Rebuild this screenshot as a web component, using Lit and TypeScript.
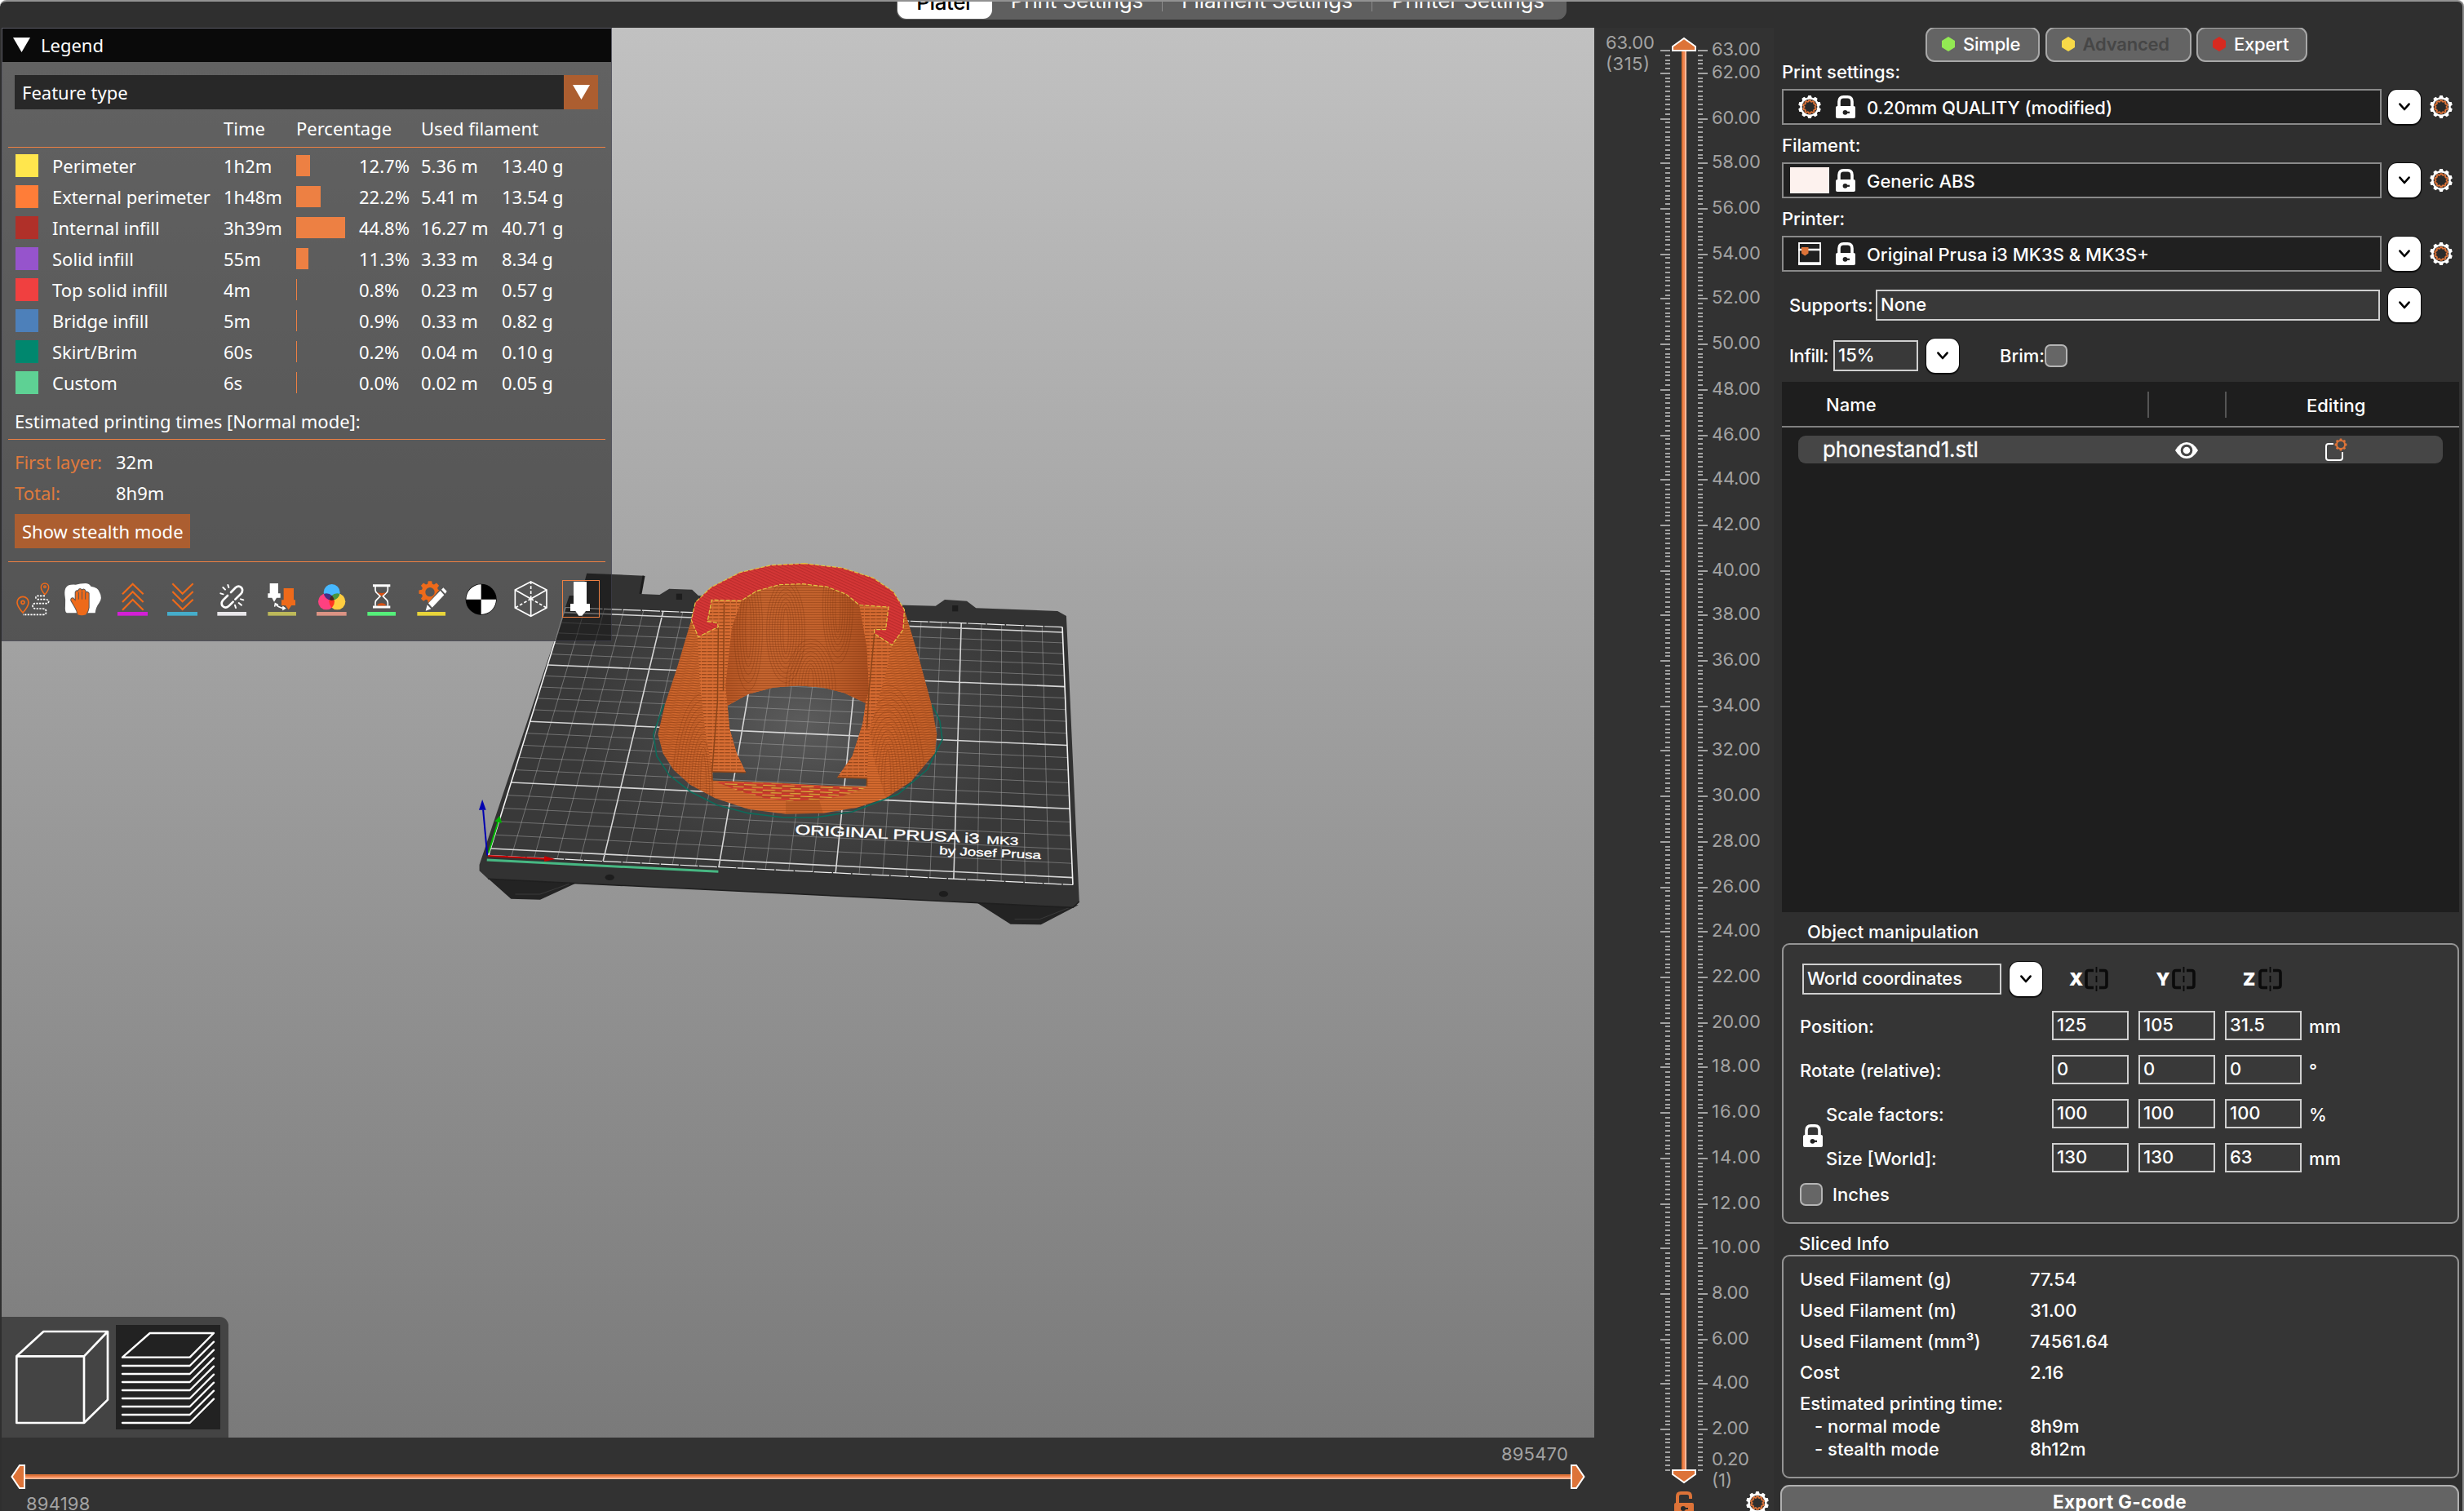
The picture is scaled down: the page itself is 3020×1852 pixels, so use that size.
import { LitElement, html, css, svg } from "lit";
import { customElement, property } from "lit/decorators.js";

type Pt = [number, number];

/* ---------- geometry helpers ---------- */

function cogPath(cx: number, cy: number, outer: number, inner: number, teeth: number): string {
  const step = (Math.PI * 2) / teeth;
  const pts: string[] = [];
  for (let i = 0; i < teeth; i++) {
    const a = i * step - Math.PI / 2;
    const ring: [number, number][] = [
      [-0.36, inner],
      [-0.2, outer],
      [0.2, outer],
      [0.36, inner],
    ];
    for (const [k, r] of ring) {
      pts.push(`${(cx + Math.cos(a + k * step) * r).toFixed(2)} ${(cy + Math.sin(a + k * step) * r).toFixed(2)}`);
    }
  }
  return `M${pts.join("L")}Z`;
}

/* Maps the unit square to a quad: (0,0) (1,0) (1,1) (0,1). */
function quadMap(a: Pt, b: Pt, c: Pt, d: Pt) {
  const dx1 = b[0] - c[0], dx2 = d[0] - c[0], sx = a[0] - b[0] + c[0] - d[0];
  const dy1 = b[1] - c[1], dy2 = d[1] - c[1], sy = a[1] - b[1] + c[1] - d[1];
  const den = dx1 * dy2 - dx2 * dy1;
  const g = (sx * dy2 - dx2 * sy) / den;
  const h = (dx1 * sy - sx * dy1) / den;
  const m = [b[0] - a[0] + g * b[0], d[0] - a[0] + h * d[0], a[0], b[1] - a[1] + g * b[1], d[1] - a[1] + h * d[1], a[1]];
  return (u: number, v: number): Pt => {
    const w = g * u + h * v + 1;
    return [(m[0] * u + m[1] * v + m[2]) / w, (m[3] * u + m[4] * v + m[5]) / w];
  };
}

const bedUnit = quadMap([81, 1140], [1479, 1247], [1455, 345], [257, 272]);
const bed = (x: number, y: number): Pt => bedUnit(x / 250, (y - 5) / 200);
const seg = (a: Pt, b: Pt) => `M${a[0].toFixed(1)} ${a[1].toFixed(1)}L${b[0].toFixed(1)} ${b[1].toFixed(1)}`;

function gridPaths() {
  let minor = "";
  let major = "";
  for (let x = 10; x < 250; x += 10) {
    const line = seg(bed(x, 0), bed(x, 210));
    if (x % 50 === 0) major += line;
    else minor += line;
  }
  for (let y = 5; y <= 205; y += 10) {
    const line = seg(bed(0, y), bed(250, y));
    if ((y - 5) % 50 === 0) major += line;
    else minor += line;
  }
  const edge = seg(bed(0, 0), bed(0, 210)) + seg(bed(250, 0), bed(250, 210));
  const dashed = seg(bed(0, 0), bed(250, 0)) + seg(bed(0, 210), bed(250, 210));
  const surface = "M" + [bed(0, 0), bed(250, 0), bed(250, 210), bed(0, 210)].map((p) => p.join(" ")).join("L") + "Z";
  return { minor, major, edge, dashed, surface };
}

/* Nested contour rings that give the printed walls their layered grain. */
function grain(cx: number, cy: number, rx: number, ry: number, count: number) {
  return Array.from({ length: count }, (_, i) => {
    const k = (i + 1) / count;
    return svg`<ellipse cx=${cx} cy=${cy} rx=${rx * k} ry=${ry * (0.35 + 0.65 * k)} />`;
  });
}

/* ---------- shared icons ---------- */

const cogIcon = (size = 28) => html`<svg width=${size} height=${size} viewBox="0 0 28 28">
  <path d=${cogPath(14, 14, 14, 11.8, 10)} fill="#fff" />
  <circle cx="14" cy="14" r="9.4" fill="#2b2b2b" />
  <path d=${cogPath(14, 14, 8, 6.6, 10)} fill="none" stroke="#dd7338" stroke-width="1.7" />
</svg>`;

const lockIcon = html`<svg width="24" height="28" viewBox="0 0 24 28">
  <path d="M4 14V7.5Q4 1.8 9.5 1.8H14.5Q20 1.8 20 7.5V14" fill="none" stroke="#fff" stroke-width="3.6" />
  <rect x="0" y="13" width="24" height="15" rx="2" fill="#fff" />
  <circle cx="11.5" cy="20.8" r="2.9" fill="#222" />
  <rect x="12" y="19.7" width="5" height="2.2" fill="#222" />
</svg>`;

const printerIcon = html`<svg width="28" height="28" viewBox="0 0 28 28">
  <path d="M1 1H27V27H1Z" fill="none" stroke="#fff" stroke-width="1.8" />
  <path d="M0 25.5H28M0 9H28" stroke="#fff" stroke-width="2.4" />
  <path d="M4 6H12.5V13.5L8.2 16.5L4 13.5Z" fill="#dd7338" />
</svg>`;

const chevron = html`<svg width="16" height="12" viewBox="0 0 16 12">
  <path d="M2.4 2.6L8 9L13.6 2.6" fill="none" stroke="#000" stroke-width="2.6" stroke-linecap="round" stroke-linejoin="round" />
</svg>`;

const mirrorIcon = html`<svg width="29" height="30" viewBox="0 0 29 30">
  <path d="M11 4.5H5Q2 4.5 2 7.5V22.5Q2 25.5 5 25.5H11M18 4.5H24Q27 4.5 27 7.5V22.5Q27 25.5 24 25.5H18" fill="none" stroke="#0b0b0b" stroke-width="3.6" />
  <path d="M14.5 0V7M14.5 11V19M14.5 23V30" stroke="#0b0b0b" stroke-width="1.8" />
</svg>`;

const downTriangle = html`<svg width="21" height="18" viewBox="0 0 21 18"><path d="M0 0H21L10.5 18Z" fill="#fff" /></svg>`;

/* ---------- legend ---------- */

interface Feature {
  name: string;
  color: string;
  time: string;
  bar: number;
  pct: string;
  length: string;
  weight: string;
}

const FEATURES: Feature[] = [
  { name: "Perimeter", color: "#ffe64d", time: "1h2m", bar: 17, pct: "12.7%", length: "5.36 m", weight: "13.40 g" },
  { name: "External perimeter", color: "#ff7d38", time: "1h48m", bar: 30, pct: "22.2%", length: "5.41 m", weight: "13.54 g" },
  { name: "Internal infill", color: "#b03029", time: "3h39m", bar: 60, pct: "44.8%", length: "16.27 m", weight: "40.71 g" },
  { name: "Solid infill", color: "#9654cc", time: "55m", bar: 15, pct: "11.3%", length: "3.33 m", weight: "8.34 g" },
  { name: "Top solid infill", color: "#f04040", time: "4m", bar: 1, pct: "0.8%", length: "0.23 m", weight: "0.57 g" },
  { name: "Bridge infill", color: "#4d80ba", time: "5m", bar: 1, pct: "0.9%", length: "0.33 m", weight: "0.82 g" },
  { name: "Skirt/Brim", color: "#00876e", time: "60s", bar: 1, pct: "0.2%", length: "0.04 m", weight: "0.10 g" },
  { name: "Custom", color: "#5ed194", time: "6s", bar: 1, pct: "0.0%", length: "0.02 m", weight: "0.05 g" },
];

const OR = "#ee6a1a";
const underline = (x: number, w: number, color: string) => svg`<rect x=${x} y="114" width=${w} height="14" fill=${color} />`;

const LEGEND_ICONS = [
  svg`<path d="M27 117Q6 94 6 79A21 21 0 0 1 48 79Q48 94 27 117Z" fill="none" stroke=${OR} stroke-width="5" />
      <circle cx="27" cy="79" r="6" fill="none" stroke=${OR} stroke-width="5" />
      <path d="M108 50Q94 34 94 23A14 14 0 0 1 122 23Q122 34 108 50Z" fill="none" stroke=${OR} stroke-width="4.5" />
      <circle cx="108" cy="22" r="4" fill="none" stroke=${OR} stroke-width="4" />
      <path d="M108 55H82Q74 56 75 62Q77 68 84 68H112Q122 69 122 76Q121 83 112 83H72Q63 84 63 92Q64 101 74 102H100Q113 103 113 113Q113 124 102 124H27" fill="none" stroke="#fff" stroke-width="5" stroke-dasharray="7 4" />`,
  svg`<path d="M3 24Q10 12 38 14Q54 9 74 9Q88 9 94 20Q122 24 126 42Q138 62 124 82Q112 98 110 118H6Q-2 116 0 90Q2 70 -2 50Q-3 32 3 24Z" fill="#fff" />
      <path d="M46 124Q44 108 36 96L22 72Q20 64 28 64L38 74V42Q43 32 48 42V36Q55 24 61 36V37Q68 26 74 38V46Q80 36 86 46V98Q84 112 76 124Q60 130 46 124Z" fill=${OR} stroke="#565656" stroke-width="6" paint-order="stroke" />
      <path d="M49 42V68M61.500 38V68M74 44V68" stroke="#565656" stroke-width="3" />`,
  svg`<path d="M27 49L65 11L104 49M27 78L65 40L104 78M27 107L65 69L104 107" fill="none" stroke=${OR} stroke-width="6.500" />${underline(9, 111, "#d31fd6")}`,
  svg`<path d="M28 10L65 47L104 10M28 39L65 76L104 39M28 68L65 105L104 68" fill="none" stroke=${OR} stroke-width="6.500" />${underline(9, 111, "#45adcb")}`,
  svg`<g fill="none" stroke="#fff" stroke-width="8" stroke-linecap="round"><path d="M60 42L77 25Q88 15 98 24Q107 34 98 46L76 68" /><path d="M48 54L31 71Q21 83 30 93Q42 103 53 92L68 77" /><path stroke-width="6" d="M49 15L52 24M31 24L39 32M22 46L32 49M96 67L106 70M89 81L99 89M75 89L78 99" /></g>${underline(10, 107, "#e8e6ea")}`,
  svg`<path d="M20 9H51V46H59V62H45L36 77L28 62H13V46H20Z" fill="#fff" />
      <path d="M71 27H108V70H114V90H100L89 106L78 90H63V70H71Z" fill=${OR} />
      <path d="M40 84Q50 98 74 101M38 95L40 83L51 88M67 94L76 101L66 107" fill="none" stroke="#fff" stroke-width="4.500" />${underline(13, 104, "#bdb95a")}`,
  svg`<g style="isolation:isolate"><circle cx="65" cy="42" r="30" fill="#47b8ff" /><circle cx="45" cy="76" r="30" fill="#ff4080" style="mix-blend-mode:multiply" /><circle cx="85" cy="76" r="30" fill="#ffcd40" style="mix-blend-mode:multiply" /></g>${underline(9, 110, "#db9384")}`,
  svg`<path d="M33 17H97M33 96H97" stroke="#fff" stroke-width="9" />
      <path d="M42 20V34Q42 42 50 47L60 56L50 66Q42 72 42 80V92M88 20V34Q88 42 80 47L70 56L80 66Q88 72 88 80V92" fill="none" stroke="#fff" stroke-width="5" />
      <path d="M48 41Q65 49 82 41L65 56Z" fill="#dd5010" /><path d="M48 91Q52 82 65 82Q78 82 82 91Z" fill="#dd5010" />${underline(13, 104, "#55ef7a")}`,
  svg`<path d=${cogPath(60, 41, 41, 31, 8)} fill=${OR} /><circle cx="60" cy="41" r="17" fill="#565656" />
      <path d="M44 113L54 80L104 22L128 44L80 104Z" fill="#565656" />
      <path d="M44 110L50 88L64 103ZM54 82L98 36L112 52L68 98ZM102 32L109 25L122 38L116 47Z" fill="#fff" />${underline(13, 104, "#e8d43a")}`,
  svg`<circle cx="65" cy="68" r="57" fill="#000" /><path d="M65 68V13A55 55 0 0 0 10 68ZM65 68V123A55 55 0 0 0 120 68Z" fill="#fff" />`,
  svg`<path d="M65 3L123 33V99L65 130L7 99V33ZM7 33L65 66L123 33M65 66V130" fill="none" stroke="#fff" stroke-width="5" /><path d="M65 66V3M65 66L7 99M65 66L123 99" fill="none" stroke="#fff" stroke-width="5" stroke-dasharray="11 7" />`,
  svg`<path d="M39 3H87V84H99V111H84L70 128H58L46 111H27V84H39Z" fill="#fff" />`,
];

@customElement("gcode-legend")
class GcodeLegend extends LitElement {
  static styles = css`
    :host { display: block; box-sizing: border-box; width: 748px; height: 752px; font: 22px/30px "Noto Sans", "Open Sans", sans-serif; color: #fff; background: rgba(18, 18, 18, 0.54); border: 1px solid rgba(80, 80, 100, 0.5); }
    .title { display: flex; align-items: center; height: 41px; background: #0a0a0a; padding: 0 0 1px 13px; box-sizing: border-box; gap: 13px; }
    .combo { display: flex; margin: 16px 16px 0 15px; height: 42px; background: #282828; justify-content: space-between; align-items: center; padding-left: 9px; }
    .combo-btn { width: 42px; height: 42px; background: #ac5e30; display: flex; align-items: center; justify-content: center; }
    .cols { display: grid; grid-template-columns: 45px 210px 89px 77px 76px 99px 1fr; align-items: center; padding-left: 16px; height: 38px; }
    .head { height: 46px; }
    .span2 { grid-column: span 2; white-space: nowrap; }
    .rule { height: 1px; background: #ed8043; margin: 0 7px; }
    .rows { padding-top: 3px; }
    .swatch { width: 28px; height: 28px; }
    .bar { height: 26px; background: #ed8043; }
    .times { padding: 13px 0 0 15px; height: 50px; box-sizing: border-box; }
    .pair { display: grid; grid-template-columns: 124px 1fr; height: 38px; align-items: center; padding-left: 15px; }
    .first { margin-top: 8px; }
    .key { color: #e07a3c; }
    .stealth { margin: 7px 0 0 15px; width: 215px; height: 42px; background: #ac5e30; display: flex; align-items: center; padding-left: 9px; box-sizing: border-box; white-space: nowrap; }
    .rule.last { margin-top: 16px; }
    .icons { display: flex; gap: 17px; padding: 23px 0 0 16px; }
    .icon { display: block; width: 44px; height: 44px; overflow: visible; }
    .icon.on { outline: 1px solid #ed8043; }
  `;
  render() {
    return html`
      <div class="title">${downTriangle}<span>Legend</span></div>
      <div class="combo"><span>Feature type</span><div class="combo-btn">${downTriangle}</div></div>
      <div class="cols head"><span></span><span></span><span>Time</span><span class="span2">Percentage</span><span class="span2">Used filament</span></div>
      <div class="rule"></div>
      <div class="rows">
        ${FEATURES.map((f) => html`<div class="cols">
          <div class="swatch" style="background:${f.color}"></div><span>${f.name}</span><span>${f.time}</span>
          <div class="bar" style="width:${f.bar}px"></div><span>${f.pct}</span><span>${f.length}</span><span>${f.weight}</span>
        </div>`)}
      </div>
      <div class="times">Estimated printing times [Normal mode]:</div>
      <div class="rule"></div>
      <div class="pair first"><span class="key">First layer:</span><span>32m</span></div>
      <div class="pair"><span class="key">Total:</span><span>8h9m</span></div>
      <div class="stealth">Show stealth mode</div>
      <div class="rule last"></div>
      <div class="icons">
        ${LEGEND_ICONS.map((g, i) => html`<svg class="icon ${i === 11 ? "on" : ""}" viewBox="0 0 132 132">${g}</svg>`)}
      </div>
    `;
  }
}

/* ---------- 3D scene ---------- */

const OUTER = "M835 92L755 98L680 125L610 180L573 235L563 300L530 470L500 610L483 720L495 790L520 850L560 905L620 955L700 995L790 1013L880 1010L960 990L1030 955L1090 895L1148 790L1153 720L1140 610L1110 440L1075 262L1048 195L1000 145L925 108Z";
const HOLE = "M650 615L700 572L760 548L820 541L880 548L930 568L982 605L975 680L950 800L914 878L985 882L983 912L905 910L760 898L615 890L613 857L694 860L672 790L655 700Z";
const INNER = "M683 229L720 193L775 170L830 167L890 178L935 205L967 245L985 400L990 560L982 605L930 568L880 548L820 541L760 548L700 572L648 615L645 540L660 330Z";
const TOP = "M835 92L755 98L680 125L610 180L573 235L563 300L580 362L628 325L625 310L602 305L612 226L683 229L720 193L775 170L830 167L890 178L935 205L967 245L1037 252L1030 335L1003 335L1003 350L1045 392L1072 335L1075 262L1048 195L1000 145L925 108Z";
const PILLAR_L = "M578 362L628 325L625 310L604 305L612 226L683 229L660 330L645 540L650 615L655 700L672 790L694 860L613 857L596 700L583 520Z";
const PILLAR_R = "M1045 392L1003 350L1003 335L1030 335L1037 252L967 245L985 400L990 560L982 605L975 680L950 800L914 878L985 882L992 700L1030 500Z";
const SIDE_L = "M563 300L530 470L500 610L483 720L495 790L520 850L560 905L620 955L613 857L596 700L583 520L578 362Z";
const SIDE_R = "M1075 262L1110 440L1140 610L1153 720L1148 790L1090 895L1030 955L1000 800L992 700L1045 392Z";

@customElement("plater-scene")
class PlaterScene extends LitElement {
  static styles = css`
    :host { display: block; }
    .canvas { display: block; }
    .crisp path, .crisp ellipse { vector-effect: non-scaling-stroke; }
    .print { font-family: "Liberation Sans", Arial, sans-serif; fill: #fff; }
  `;
  render() {
    const g = gridPaths();
    return html`<svg class="canvas" width="1952" height="1728" viewBox="2 34 1952 1728">
      <defs>
        <radialGradient id="glow" gradientUnits="userSpaceOnUse" cx="830" cy="680" r="560">
          <stop offset="0" stop-color="#5c5c5c" /><stop offset="0.45" stop-color="#474747" /><stop offset="1" stop-color="#393939" />
        </radialGradient>
        <linearGradient id="shade" gradientUnits="userSpaceOnUse" x1="480" y1="0" x2="1160" y2="0">
          <stop offset="0" stop-color="#cc642b" /><stop offset="0.2" stop-color="#d16a30" /><stop offset="0.8" stop-color="#d3692e" /><stop offset="1" stop-color="#c36029" />
        </linearGradient>
        <linearGradient id="wall" gradientUnits="userSpaceOnUse" x1="645" y1="0" x2="990" y2="0">
          <stop offset="0" stop-color="#b25423" /><stop offset="0.25" stop-color="#c4642f" /><stop offset="0.7" stop-color="#c2612c" /><stop offset="1" stop-color="#a84e20" />
        </linearGradient>
        <pattern id="lay" width="60" height="9" patternUnits="userSpaceOnUse"><rect width="60" height="3" fill="#7c3410" opacity="0.4" /></pattern>
        <pattern id="layL" width="60" height="9" patternUnits="userSpaceOnUse" patternTransform="rotate(24)"><rect width="60" height="3.500" fill="#7c3410" opacity="0.25" /></pattern>
        <pattern id="layR" width="60" height="9" patternUnits="userSpaceOnUse" patternTransform="rotate(-26)"><rect width="60" height="3.500" fill="#7c3410" opacity="0.25" /></pattern>
        <pattern id="step" width="14" height="12" patternUnits="userSpaceOnUse"><rect y="6" width="12" height="4" fill="#6e300e" opacity="0.6" /></pattern>
        <pattern id="solid" width="8" height="9" patternUnits="userSpaceOnUse" patternTransform="rotate(35)"><rect width="8" height="3" fill="#9c2020" opacity="0.45" /></pattern>
        <pattern id="dish" width="46" height="18" patternUnits="userSpaceOnUse" patternTransform="rotate(3)"><rect width="46" height="18" fill="#c9382e" /><rect y="2" width="30" height="3" fill="#dcc53c" /><rect x="20" y="11" width="26" height="3" fill="#dcc53c" /><rect y="7" width="46" height="3" fill="#a8471f" /></pattern>
        <clipPath id="innerClip"><path d=${INNER} /></clipPath>
        <clipPath id="sideClip"><path d=${SIDE_L + SIDE_R} /></clipPath>
      </defs>
      <g class="crisp" transform="matrix(0.510204 0 0 0.333333 560 660)">
        <path d="M75 1250L130 1325L200 1328L285 1268ZM1250 1340L1330 1418L1403 1420L1493 1348Z" fill="#232323" />
        <path d="M140 1308H200L270 1270M1340 1400H1400L1470 1358" fill="none" stroke="#3a3a3a" />
        <path d="M312 128L449 137L441 204L487 207L510 185L565 188L580 210L1075 245L1150 248L1172 225L1225 230L1247 256L1443 267L1464 285L1495 1335L1480 1357L75 1252L54 1222V1200L270 210H298Z" fill="#323232" />
        <path d="M75 1252L1480 1357L1495 1335" fill="none" stroke="#1f1f1f" stroke-width="1.500" />
        <path d="M449 137L441 204" stroke="#1c1c1c" stroke-width="3" />
        <ellipse cx="367" cy="1246" rx="11" ry="11" fill="#1d1d1d" /><ellipse cx="1169" cy="1307" rx="11" ry="11" fill="#1d1d1d" />
        <rect x="527" y="203" width="14" height="22" fill="#1d1d1d" /><rect x="1190" y="246" width="14" height="22" fill="#1d1d1d" />
        <path d=${g.surface} fill="url(#glow)" />
        <path d=${g.minor} stroke="#a9a9a9" stroke-opacity="0.5" stroke-width="1" />
        <path d=${g.major} stroke="#d6d6d6" stroke-width="1.600" />
        <path d=${g.edge} stroke="#f2f2f2" stroke-width="1.600" />
        <path d=${g.dashed} stroke="#f0f0f0" stroke-width="1.200" stroke-dasharray="22 1.500" />
        <path d="M497 610L472 720L480 800L510 870L560 930L625 980L700 1010L785 1026H860L950 1005L1060 940L1130 850L1166 740L1160 670L1142 612" fill="none" stroke="#0d6b5a" stroke-width="1.600" />
        <path d=${OUTER + HOLE} fill-rule="evenodd" fill="url(#shade)" />
        <path d=${OUTER + HOLE} fill-rule="evenodd" fill="url(#lay)" />
        <path d=${SIDE_L} fill="url(#layL)" />
        <path d=${SIDE_R} fill="url(#layR)" />
        <g clip-path="url(#sideClip)" fill="none" stroke="#7a3512" stroke-opacity="0.3" stroke-width="1">
          ${grain(1035, 940, 90, 400, 11)}${grain(592, 950, 75, 380, 10)}
        </g>
        <path d=${INNER} fill="url(#wall)" />
        <path d=${INNER} fill="url(#lay)" />
        <g clip-path="url(#innerClip)" fill="none" stroke="#6c3010" stroke-opacity="0.28" stroke-width="1">
          ${grain(790, 340, 46, 190, 7)}${grain(915, 250, 36, 210, 6)}${grain(850, 560, 60, 190, 8)}${grain(700, 330, 34, 230, 5)}
        </g>
        <path d=${PILLAR_L} fill="#d76d33" /><path d=${PILLAR_L} fill="url(#step)" />
        <path d=${PILLAR_R} fill="#d46a31" /><path d=${PILLAR_R} fill="url(#step)" />
        <path d="M628 325L626 600L613 857M642 240L640 560M1003 350L990 560L985 700" fill="none" stroke="#8d4519" stroke-width="1.500" />
        <path d="M694 860L613 857V890M914 878L985 882V912" fill="none" stroke="#8d4519" stroke-width="1.500" />
        <path d="M620 893L760 900L980 918L930 945L880 958L800 965L740 955L680 930Z" fill="url(#dish)" />
        <path d="M790 965L870 960L880 1010L790 1013Z" fill="#8d4014" opacity="0.25" />
        <path d=${TOP} fill="#d43636" /><path d=${TOP} fill="url(#solid)" />
        <path d=${TOP} fill="none" stroke="#e0c444" stroke-width="1.200" stroke-dasharray="5 2" />
        <path d="M72 1182L628 1225" stroke="#47b883" stroke-width="3" />
        <path d="M75 1167L215 1178" stroke="#c80000" stroke-width="2" /><path d="M210 1168L236 1179L210 1188Z" fill="#c80000" />
        <path d="M76 1155L99 1042" stroke="#00b400" stroke-width="2" /><path d="M91 1040L103 1020L108 1046Z" fill="#00b400" />
        <path d="M73 1165L63 998" stroke="#0000b0" stroke-width="2" /><path d="M53 998L61 960L70 998Z" fill="#0000b0" />
      </g>
      <g class="print">
        <text transform="translate(974.500 1022.500) rotate(2.800)" font-size="17" textLength="226" lengthAdjust="spacingAndGlyphs" stroke="#fff" stroke-width="0.400">ORIGINAL PRUSA i3</text>
        <text transform="translate(1209 1034) rotate(2.800)" font-size="13.500" textLength="39" lengthAdjust="spacingAndGlyphs" stroke="#fff" stroke-width="0.300">MK3</text>
        <text transform="translate(1151 1047) rotate(2.800)" font-size="14" textLength="125" lengthAdjust="spacingAndGlyphs" stroke="#fff" stroke-width="0.300">by Josef Prusa</text>
      </g>
    </svg>`;
  }
}

/* ---------- sliders ---------- */

const tickY = (z: number) => 2 * Math.round((62 + ((63 - z) * 1740) / 62.8) / 2);

@customElement("layer-slider")
class LayerSlider extends LitElement {
  static styles = css`
    :host { display: block; background: #323232; }
    .ruler { display: block; }
    .num { font: 22px Inter, "Liberation Sans", sans-serif; fill: #a3a3a3; }
  `;
  render() {
    let d = "";
    for (let i = 1; i <= 315; i++) {
      const y = tickY(i * 0.2);
      const w = i % 10 === 0 || i === 315 ? 12 : 6;
      d += `M${2047 - w} ${y}H2047M2081 ${y}h${w}`;
    }
    const labels = [63, ...Array.from({ length: 31 }, (_, i) => 62 - i * 2)];
    return html`<svg class="ruler" width="220" height="1818" viewBox="1954 34 220 1818">
      <path d=${d} stroke="#a3a3a3" stroke-width="2" />
      ${labels.map((z) => svg`<text class="num" x="2098" y=${tickY(z) + 6} textLength=${z > 9 ? 60 : 46}>${z.toFixed(2)}</text>`)}
      <text class="num" x="2098" y="1796" textLength="46">0.20</text>
      <text class="num" x="2098" y="1822">(1)</text>
      <text class="num" x="1968" y="60" textLength="60">63.00</text>
      <text class="num" x="1968" y="86" textLength="54">(315)</text>
      <rect x="2061" y="62" width="2" height="1740" fill="#dd7338" />
      <rect x="2063" y="62" width="2" height="1740" fill="#f08552" />
      <rect x="2065" y="62" width="2" height="1740" fill="#fbb896" />
      <path d="M2050 57L2064 47L2078 57V62H2050Z" fill="#dd7338" stroke="#fff" stroke-width="2" />
      <path d="M2050 1807L2064 1817L2078 1807V1802H2050Z" fill="#dd7338" stroke="#fff" stroke-width="2" />
      <path d="M2056 1843V1834Q2056 1830 2060 1830H2068Q2072 1830 2072 1834V1837" fill="none" stroke="#dd7338" stroke-width="4" />
      <rect x="2052" y="1842" width="24" height="14" rx="2" fill="#dd7338" />
      <circle cx="2063" cy="1849" r="3" fill="#2a2a2a" /><rect x="2064" y="1848" width="5" height="2" fill="#2a2a2a" />
      <path d=${cogPath(2154, 1842, 14, 11.6, 10)} fill="#fff" /><circle cx="2154" cy="1842" r="9.200" fill="#2f2f2f" />
      <path d=${cogPath(2154, 1842, 8, 6.5, 10)} fill="none" stroke="#dd7338" stroke-width="1.800" />
    </svg>`;
  }
}

@customElement("moves-slider")
class MovesSlider extends LitElement {
  static styles = css`
    :host { display: flex; flex-direction: column; height: 90px; background: #323232; font: 22px/26px Inter, "Liberation Sans", sans-serif; letter-spacing: 0.2px; color: #a3a3a3; overflow: hidden; }
    .top { text-align: right; padding: 7px 32px 0 0; height: 28px; }
    .line { display: flex; align-items: center; padding: 0 11px 0 11px; height: 30px; }
    .track { flex: 1; height: 6px; background: linear-gradient(#dd7338 0 2px, #f08552 2px 4px, #fbb896 4px 6px); }
    .knob { display: block; }
    .bottom { padding: 5px 0 0 30px; }
  `;
  render() {
    return html`<div class="top">895470</div>
      <div class="line">
        <svg class="knob" width="18" height="30" viewBox="0 0 18 30"><path d="M11 1H17V29H11L1.500 15Z" fill="#dd7338" stroke="#fff" stroke-width="2" /></svg>
        <div class="track"></div>
        <svg class="knob" width="18" height="30" viewBox="0 0 18 30"><path d="M7 1H1V29H7L16.500 15Z" fill="#dd7338" stroke="#fff" stroke-width="2" /></svg>
      </div>
      <div class="bottom">894198</div>`;
  }
}

/* ---------- settings panel ---------- */

@customElement("drop-button")
class DropButton extends LitElement {
  static styles = css`
    :host { display: flex; box-sizing: border-box; width: 40px; height: 42px; background: #fff; border-radius: 11px; align-items: center; justify-content: center; box-shadow: 0 0 0 1px #0e0e0e, 0 1px 1px 1px #0e0e0e; flex: none; }
  `;
  render() {
    return chevron;
  }
}

@customElement("preset-row")
class PresetRow extends LitElement {
  @property() label = "";
  @property() value = "";
  @property() kind = "";
  static styles = css`
    :host { display: block; height: 90px; }
    .label { height: 24px; line-height: 25px; }
    .row { display: flex; margin-top: 9px; height: 44px; align-items: center; }
    .box { display: flex; box-sizing: border-box; width: 735px; height: 44px; border: 2px solid #8a8a8a; background: #202020; align-items: center; }
    .lead { width: 48px; margin-left: 8px; display: flex; justify-content: center; }
    .color { width: 48px; height: 32px; background: #fdf2ee; }
    .lock { display: flex; margin-left: 8px; }
    .text { margin: 1px 0 0 14px; }
    .text.print { letter-spacing: -0.15px; }
    drop-button { margin: 0 11px 0 8px; }
    svg { display: block; }
  `;
  render() {
    const lead = this.kind === "print" ? cogIcon() : this.kind === "printer" ? printerIcon : html`<div class="color"></div>`;
    return html`<div class="label">${this.label}</div>
      <div class="row">
        <div class="box"><div class="lead">${lead}</div><div class="lock">${lockIcon}</div><span class="text ${this.kind}">${this.value}</span></div>
        <drop-button></drop-button>${cogIcon()}
      </div>`;
  }
}

const MODES = [
  { name: "Simple", color: "#93ea53", width: 140, off: false },
  { name: "Advanced", color: "#f8d948", width: 179, off: true },
  { name: "Expert", color: "#d72a20", width: 136, off: false },
];

const TRANSFORMS = [
  { label: "Position:", values: ["125", "105", "31.5"], unit: "mm", indent: false },
  { label: "Rotate (relative):", values: ["0", "0", "0"], unit: "°", indent: false },
  { label: "Scale factors:", values: ["100", "100", "100"], unit: "%", indent: true },
  { label: "Size [World]:", values: ["130", "130", "63"], unit: "mm", indent: true },
];

const SLICED = [
  ["Used Filament (g)", "77.54"],
  ["Used Filament (m)", "31.00"],
  ["Used Filament (mm³)", "74561.64"],
  ["Cost", "2.16"],
];

@customElement("settings-panel")
class SettingsPanel extends LitElement {
  static styles = css`
    :host { display: block; width: 830px; font: 500 22px/26px Inter, "Liberation Sans", sans-serif; letter-spacing: 0; color: #fff; white-space: nowrap; }
    svg { display: block; }
    .modes { display: flex; gap: 6.5px; height: 42px; padding-left: 176px; overflow: hidden; align-items: flex-end; }
    .mode { display: flex; flex: none; align-items: center; box-sizing: border-box; height: 43px; border: 2px solid #a8a8a8; border-radius: 11px; background: #646464; padding: 0 0 1px 18px; gap: 10px; letter-spacing: -0.2px; }
    .mode.off { color: #464646; font-weight: 600; }
    .line { display: flex; align-items: center; height: 42px; padding-left: 9px; }
    .supports { margin-top: 7px; }
    .infill { margin-top: 20px; }
    .input { box-sizing: border-box; border: 2px solid #cfcfcf; background: #393939; height: 38px; padding: 3px 0 0 4px; line-height: 26px; }
    .supports .name { width: 106px; }
    .supports .input { width: 618px; }
    .infill .name { width: 54px; letter-spacing: -0.4px; }
    .infill .input { width: 104px; }
    .supports drop-button { margin-left: 10px; }
    .infill drop-button { margin-left: 10px; }
    .brim { margin-left: 50px; width: 55px; }
    .check { box-sizing: border-box; width: 28px; height: 28px; border: 2px solid #b5b5b5; border-radius: 7px; background: #666; }
    .list { margin-top: 11px; height: 650px; background: #1e1e1e; }
    .list-head { display: grid; grid-template-columns: 448px 95px 1fr; height: 56px; box-sizing: border-box; border-bottom: 2px solid #808080; align-items: center; padding-top: 1px; }
    .list-head .n { padding-left: 54px; }
    .list-head .c { border-left: 2px solid #555; height: 32px; box-sizing: border-box; }
    .list-head .e { padding-left: 98px; border-left: 2px solid #555; height: 32px; line-height: 34px; box-sizing: border-box; }
    .item { display: flex; align-items: center; margin: 10px 20px 0; height: 34px; background: #464646; border-radius: 9px; }
    .file { font-size: 26px; width: 431px; padding-left: 30px; font-weight: 400; -webkit-text-stroke: 0.3px #fff; letter-spacing: -0.1px; }
    .eye { margin: 2px 0 0 1px; }
    .edit { margin-left: 155px; overflow: visible; }
    .caption { height: 24px; line-height: 24px; margin: 12px 0 2px; padding-left: 21px; }
    .caption.obj { padding-left: 31px; }
    .group { box-sizing: border-box; border: 2px solid #949494; border-radius: 9px; background: #353535; }
    .object { height: 344px; padding: 21px 0 0 20px; }
    .world { display: flex; align-items: center; height: 42px; margin-bottom: 9px; padding-left: 3px; }
    .world .input { width: 244px; margin-right: 10px; letter-spacing: -0.15px; }
    .axis { display: flex; align-items: center; width: 106.5px; font-weight: 700; }
    .axes { display: flex; padding-left: 33px; }
    .axis b { width: 19px; }
    .grid { display: grid; grid-template-columns: 32px 277px 106px 106px 103px 1fr; grid-auto-rows: 54px; align-items: center; }
    .wide { grid-column: span 2; }
    .grid .label, .unit { padding-top: 2px; }
    .ratio { grid-column: 1; grid-row: 3 / span 2; padding-left: 4px; }
    .indent { grid-column: 2; }
    .grid .input { width: 94px; height: 36px; padding-top: 2px; }
    .inches { display: flex; align-items: center; height: 36px; gap: 12px; }
    .sliced { height: 274px; padding: 9px 0 0 20px; }
    .info { display: grid; grid-template-columns: 282px 1fr; height: 38px; align-items: center; }
    .info.est { height: 33px; padding-top: 5px; box-sizing: border-box; }
    .info.sub { height: 28px; }
    .info.sub span:first-child { padding-left: 18px; }
    .export { box-sizing: border-box; margin: 8px 0 0 -2px; height: 60px; border: 2px solid #b0b0b0; border-radius: 11px; background: #646464; text-align: center; font-weight: 700; font-size: 22.5px; padding-top: 6px; letter-spacing: 0.3px; }
  `;
  render() {
    const axes = ["X", "Y", "Z"];
    return html`
      <div class="modes">
        ${MODES.map((m) => html`<div class="mode ${m.off ? "off" : ""}" style="width:${m.width}px">
          <svg width="16" height="18" viewBox="0 0 16 18"><path d="M8 0L16 5V13L8 18L0 13V5Z" fill=${m.color} /></svg><span>${m.name}</span>
        </div>`)}
      </div>
      <preset-row label="Print settings:" value="0.20mm QUALITY (modified)" kind="print"></preset-row>
      <preset-row label="Filament:" value="Generic ABS" kind="filament"></preset-row>
      <preset-row label="Printer:" value="Original Prusa i3 MK3S & MK3S+" kind="printer"></preset-row>
      <div class="line supports"><span class="name">Supports:</span><div class="input">None</div><drop-button></drop-button></div>
      <div class="line infill"><span class="name">Infill:</span><div class="input">15%</div><drop-button></drop-button><span class="brim">Brim:</span><div class="check"></div></div>
      <div class="list">
        <div class="list-head"><span class="n">Name</span><span class="c"></span><span class="e">Editing</span></div>
        <div class="item">
          <span class="file">phonestand1.stl</span>
          <svg class="eye" width="28" height="20" viewBox="0 0 28 20"><path d="M0 10Q6 0 14 0Q22 0 28 10Q22 20 14 20Q6 20 0 10Z" fill="#fff" /><circle cx="14" cy="10" r="7.300" fill="#464646" /><circle cx="14" cy="10" r="4.300" fill="#fff" /></svg>
          <svg class="edit" width="28" height="27" viewBox="0 0 28 27"><path d="M11 6H5Q2 6 2 9V23Q2 26 5 26H19Q22 26 22 23V16" fill="none" stroke="#fff" stroke-width="2" /><path d=${cogPath(20, 7, 7.5, 6, 8)} fill="#dd7338" /><circle cx="20" cy="7" r="4" fill="#464646" /></svg>
        </div>
      </div>
      <div class="caption obj">Object manipulation</div>
      <div class="group object">
        <div class="world"><div class="input">World coordinates</div><drop-button></drop-button>
          <div class="axes">${axes.map((a) => html`<div class="axis"><b>${a}</b>${mirrorIcon}</div>`)}</div>
        </div>
        <div class="grid">
          <div class="ratio">${lockIcon}</div>
          ${TRANSFORMS.map((t) => html`<span class="label ${t.indent ? "indent" : "wide"}">${t.label}</span>${t.values.map((v) => html`<div class="input">${v}</div>`)}<span class="unit">${t.unit}</span>`)}
        </div>
        <div class="inches"><div class="check"></div>Inches</div>
      </div>
      <div class="caption">Sliced Info</div>
      <div class="group sliced">
        ${SLICED.map(([k, v]) => html`<div class="info"><span>${k}</span><span>${v}</span></div>`)}
        <div class="info est"><span>Estimated printing time:</span></div>
        <div class="info sub"><span>- normal mode</span><span>8h9m</span></div>
        <div class="info sub"><span>- stealth mode</span><span>8h12m</span></div>
      </div>
      <div class="export">Export G-code</div>
    `;
  }
}

/* ---------- root ---------- */

@customElement("app-root")
class AppRoot extends LitElement {
  static styles = css`
    :host { display: flex; flex-direction: column; box-sizing: border-box; width: 3020px; height: 1852px; overflow: hidden; background: #2f2f2f; border-top: 2px solid #929292; border-right: 2px solid #8a8a8a; border-radius: 8px 8px 0 0; }
    .tabs { height: 32px; flex: none; display: flex; justify-content: flex-start; padding-left: 1099px; align-items: flex-start; }
    .seg { display: flex; flex: none; width: 821px; height: 46px; margin-top: -24px; background: #5f5f5f; border-radius: 11px; align-items: center; font: 26px/48px Inter, "Liberation Sans", sans-serif; color: #fff; white-space: nowrap; letter-spacing: -0.1px; z-index: 1; }
    .tab { box-sizing: border-box; flex: none; text-align: center; }
    .tab.on { width: 116px; height: 44px; line-height: 48px; background: #fff; color: #000; border-radius: 11px; margin: -1px 0 0 1px; font-weight: 500; letter-spacing: -0.4px; }
    .tab.a { width: 208px; } .tab.b { width: 256px; } .tab.c { width: 235px; }
    .sep { width: 1px; height: 26px; background: #8c8c8c; }
    .main { display: flex; flex: 1; min-height: 0; }
    .left { width: 1952px; margin-left: 2px; flex: none; }
    .view { position: relative; height: 1728px; background: linear-gradient(#c1c1c1, #7a7a7a); }
    .legend { position: absolute; left: 0; top: 0; }
    .switch { position: absolute; left: 0; bottom: 0; box-sizing: border-box; width: 278px; height: 148px; background: #444; border-top-right-radius: 11px; display: flex; padding: 10px 0 0 12px; }
    .opt { width: 128px; height: 128px; }
    .opt.on { background: #222; }
    .opt svg { display: block; }
    .panel { margin-left: 10px; flex: none; }
  `;
  render() {
    const layers = Array.from({ length: 8 }, (_, i) => `M24 ${150 + i * 30}H272L360 ${62 + i * 30}`).join("");
    return html`
      <div class="tabs">
        <div class="seg"><span class="tab on">Plater</span><span class="tab a">Print Settings</span><span class="sep"></span><span class="tab b">Filament Settings</span><span class="sep"></span><span class="tab c">Printer Settings</span></div>
      </div>
      <div class="main">
        <div class="left">
          <div class="view">
            <plater-scene></plater-scene>
            <gcode-legend class="legend"></gcode-legend>
            <div class="switch">
              <div class="opt"><svg width="128" height="128" viewBox="0 0 384 384"><g transform="translate(-42 -102)" fill="none" stroke="#fff" stroke-width="8" stroke-linejoin="round"><path d="M61 217H309V462H61ZM61 217L160 126H396L309 217M396 126V377L309 462" /></g></svg></div>
              <div class="opt on"><svg width="128" height="128" viewBox="0 0 384 384" fill="none" stroke="#fff" stroke-width="7" stroke-linejoin="round" stroke-linecap="round"><path d="M24 119L125 30H360L272 119Z" /><path d=${layers} /></svg></div>
            </div>
          </div>
          <moves-slider></moves-slider>
        </div>
        <layer-slider></layer-slider>
        <settings-panel class="panel"></settings-panel>
      </div>
    `;
  }
}
